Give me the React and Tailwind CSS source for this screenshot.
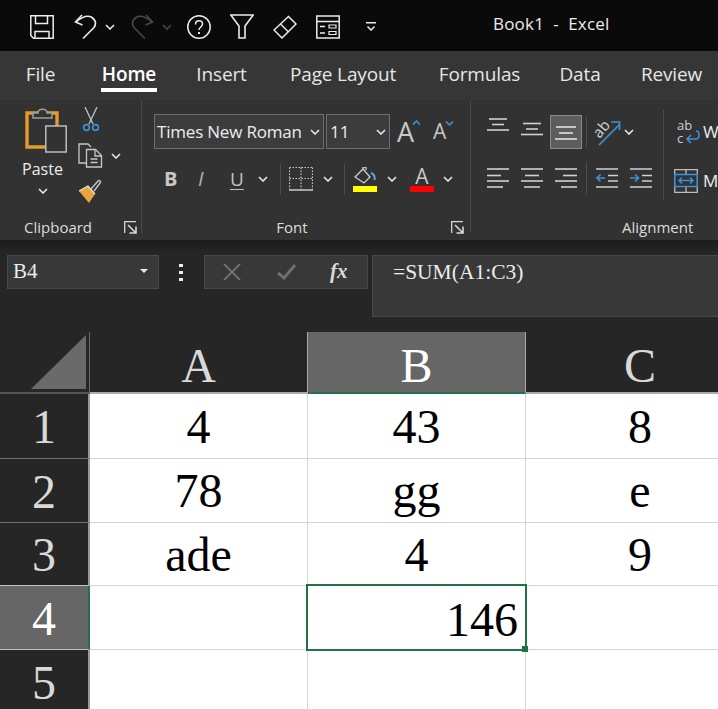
import React from 'react';

const UI_FONT = "font-['Open_Sans','Noto_Sans',sans-serif]";
const SERIF = "font-['Liberation_Serif','Times_New_Roman',serif]";

/* ── little icon helpers ── */
function Chev({ className = 'ml-0', color = '#e6e6e6' }) {
  return (
    <svg className={`${className} shrink-0`} width="10" height="6" viewBox="0 0 10 6" fill="none">
      <path d="M1 1l4 4 4-4" stroke={color} strokeWidth="1.6" />
    </svg>
  );
}

function Lines({ rows, active }) {
  // rows: [x1, x2, y] list in a 22x20 box
  return (
    <svg className="shrink-0 block" width="22" height="20" viewBox="0 0 22 20" fill="none" stroke={active ? '#e2e2e2' : '#d0d0d0'} strokeWidth="1.6">
      {rows.map(([a, b, y], i) => (
        <path key={i} d={`M${a} ${y}H${b}`} />
      ))}
    </svg>
  );
}

function Launcher() {
  return (
    <svg width="13" height="13" viewBox="0 0 13 13" fill="none" stroke="#d8d8d8" strokeWidth="1.3">
      <path d="M.7 12V.7H12" />
      <path d="M4 4l7.5 7.5M5.5 12h6.5V5.5" strokeWidth="1.6" />
    </svg>
  );
}

function GroupSep({ h = 'h-[32px]' }) {
  return <div className={`w-px ${h} bg-[#4d4d4d] shrink-0`} />;
}

function Quick() {
  const c = '#ececec';
  return (
    <div className="h-[51px] bg-[#0a0a0a] flex items-center pl-[30px] pt-[2px] shrink-0">
      {/* save */}
      <svg width="24" height="24" viewBox="0 0 24 24" fill="none" stroke={c} strokeWidth="1.5">
        <path d="M.8.8h22.4v22.4H3.5L.8 20.5z" />
        <path d="M5.5 1v7.5h12V1M5 23v-6.5h14V23" />
      </svg>
      {/* undo */}
      <svg className="ml-[20px]" width="23" height="25" viewBox="0 0 23 25" fill="none" stroke={c} strokeWidth="1.6">
        <path d="M8 1L1.5 8l7 3" />
        <path d="M2 8C8 3 14 1 18 3.5c4 3 4 7 2 10L9 24.500" />
      </svg>
      <Chev className="ml-[8px]" />
      {/* redo, disabled */}
      <svg className="ml-[16px]" width="23" height="25" viewBox="0 0 23 25" fill="none" stroke="#484848" strokeWidth="1.6">
        <path d="M15 1l6.500 7-7 3" />
        <path d="M21 8C15 3 9 1 5 3.500c-4 3-4 7-2 10l11 11" />
      </svg>
      <Chev className="ml-[8px]" color="#484848" />
      {/* help */}
      <svg className="ml-[15px]" width="24" height="24" viewBox="0 0 24 24" fill="none" stroke={c} strokeWidth="1.5">
        <circle cx="12" cy="12" r="11.200" />
        <path d="M8.500 9.500C8.500 7 10 5.800 12 5.800s3.500 1.300 3.500 3.200c0 3-3.500 3-3.500 6" />
        <path d="M12 17v2" strokeWidth="1.900" />
      </svg>
      {/* filter */}
      <svg className="ml-[19px]" width="24" height="25" viewBox="0 0 24 25" fill="none" stroke={c} strokeWidth="1.6">
        <path d="M.8 1h22.400L15 12v12H9V12z" />
      </svg>
      {/* clear */}
      <svg className="ml-[19px]" width="24" height="24" viewBox="0 0 24 24" fill="none" stroke={c} strokeWidth="1.5">
        <path d="M15.500 1.500L23 9 9 23 1 15z" />
        <path d="M7.500 9l8 8" />
      </svg>
      {/* form */}
      <svg className="ml-[19px]" width="24" height="24" viewBox="0 0 24 24" fill="none" stroke={c} strokeWidth="1.5">
        <path d="M.8 1h22.400v22H.8zM1 6.500h22" />
        <path d="M4 11.500h5M4 18h5" />
        <path d="M13 10h7v3h-7zM13 16.500h7v3h-7z" strokeWidth="1.200" />
      </svg>
      {/* customize */}
      <svg className="ml-[26px]" width="10" height="9" viewBox="0 0 10 9" fill="none" stroke={c} strokeWidth="1.500">
        <path d="M0 .8h10M1.500 4.500L5 8l3.500-3.500" />
      </svg>
      <span className={`${UI_FONT} ml-[117px] mb-[5px] text-[17px] tracking-[0.2px] text-[#ececec] whitespace-pre`}>Book1  -  Excel</span>
    </div>
  );
}

function Tabs() {
  const tabs = [
    ['File', 'w-[29px] ml-[26px]'],
    ['Home', 'w-[56px] ml-[46px]'],
    ['Insert', 'w-[47px] ml-[41px]'],
    ['Page Layout', 'w-[106px] ml-[45px]'],
    ['Formulas', 'w-[81px] ml-[43px]'],
    ['Data', 'w-[40px] ml-[40px]'],
    ['Review', 'w-[61px] ml-[41px]'],
  ];
  return (
    <div className="h-[49px] bg-[#363636] flex shrink-0">
      {tabs.map(([name, cls]) => (
        <div key={name} className={`${cls} h-full relative flex justify-center pt-[10px] shrink-0`}>
          <span className={`${UI_FONT} text-[19px] leading-[26px] tracking-[-0.15px] whitespace-nowrap ${name === 'Home' ? 'text-white font-semibold' : 'text-[#e6e6e6]'}`}>
            {name}
          </span>
          {name === 'Home' && <div className="absolute left-0 right-0 top-[37px] h-[4px] bg-white" />}
        </div>
      ))}
    </div>
  );
}

function GroupLabel({ className, children }) {
  return (
    <span className={`${UI_FONT} ${className} text-[15px] leading-[22px] text-[#dcdcdc]`}>{children}</span>
  );
}

function Clipboard() {
  return (
    <div className="w-[142px] h-[132px] mt-px border-r border-[#4a4a4a] flex flex-col shrink-0">
      <div className="flex pt-[6px]">
        <div className="w-[78px] flex flex-col items-center pl-[7px]">
          <svg className="ml-[7px]" width="42" height="46" viewBox="0 0 42 46" fill="none">
            <path d="M2 6h30v34H2z" stroke="#e69a2c" strokeWidth="3.400" />
            <path d="M8 11V6h5c0-5 9-5 9 0h5v5z" fill="#323232" stroke="#9d9d9d" strokeWidth="1.500" />
            <path d="M20.800 19h20.400v26H20.800z" fill="#323232" stroke="#bdbdbd" strokeWidth="1.500" />
          </svg>
          <span className={`${UI_FONT} text-[16px] leading-[22px] mt-[5px] text-[#ececec]`}>Paste</span>
          <Chev className="mt-[8px]" />
        </div>
        <div className="flex flex-col">
          <svg className="ml-[4px]" width="18" height="25" viewBox="0 0 18 25" fill="none">
            <path d="M3 0l8 17M15 0L7 17" stroke="#c4c4c4" strokeWidth="1.300" />
            <circle cx="4.500" cy="20.500" r="2.900" stroke="#3b92d8" strokeWidth="1.600" />
            <circle cx="13.500" cy="20.500" r="2.900" stroke="#3b92d8" strokeWidth="1.600" />
          </svg>
          <div className="flex items-center mt-[11px]">
            <svg width="25" height="25" viewBox="0 0 25 25" fill="none" stroke="#c8c8c8" strokeWidth="1.300">
              <path d="M8 20H1V1h9l3 3" />
              <path d="M8.500 6.500h9l6 6v11.500h-15z" />
              <path d="M17 7v6h6M12.500 16h7M12.500 19.500h7" />
            </svg>
            <Chev className="ml-[8px]" />
          </div>
          <svg className="mt-[11px]" width="25" height="25" viewBox="0 0 25 25" fill="none">
            <path d="M1 12l9-5 7 8-6 9z" fill="#e9a53c" />
            <path d="M1 12l9-5 7 8" stroke="#e4e4e4" strokeWidth="1.200" />
            <path d="M13 10l7-8c1.500-1.500 3.500.5 2 2l-6 8" stroke="#c8c8c8" strokeWidth="1.400" />
          </svg>
        </div>
      </div>
      <div className="flex items-center mt-auto -mb-[5px] h-[22px]">
        <GroupLabel className="ml-[24px]">Clipboard</GroupLabel>
        <div className="ml-[32px] flex"><Launcher /></div>
      </div>
    </div>
  );
}

function Combo({ w, children }) {
  return (
    <div className={`${w} h-[35px] bg-[#3c3c3c] border border-[#6e6e6e] flex items-center shrink-0`}>
      {children}
    </div>
  );
}

function Font() {
  return (
    <div className="w-[329px] h-[132px] mt-px border-r border-[#4a4a4a] flex flex-col shrink-0">
      <div className="flex items-center ml-[12px] mt-[13px] h-[35px]">
        <Combo w="w-[170px]">
          <span className={`${UI_FONT} text-[17px] ml-[2px] text-[#ececec] whitespace-nowrap tracking-[-0.2px]`}>Times New Roman</span>
          <Chev className="ml-auto mr-[3px]" />
        </Combo>
        <div className="w-[2px] shrink-0" />
        <Combo w="w-[64px]">
          <span className={`${UI_FONT} text-[17px] ml-[3px] text-[#ececec]`}>11</span>
          <Chev className="ml-auto mr-[3px]" />
        </Combo>
        <span className={`${UI_FONT} text-[27px] leading-none ml-[7px] text-[#c8c8c8] relative`}>
          A
          <svg className="absolute -right-[7px] top-[2px]" width="9" height="5" viewBox="0 0 9 5" fill="none" stroke="#3b92d8" strokeWidth="1.600"><path d="M1 4.500l3.500-3.500 3.500 3.500" /></svg>
        </span>
        <span className={`${UI_FONT} text-[21px] leading-none ml-[19px] text-[#c8c8c8] relative`}>
          A
          <svg className="absolute -right-[8px] top-[0px]" width="9" height="5" viewBox="0 0 9 5" fill="none" stroke="#3b92d8" strokeWidth="1.600"><path d="M1 .5l3.500 3.500 3.500-3.500" /></svg>
        </span>
      </div>
      <div className="flex items-center h-[32px] mt-[14px]">
        <span className={`${UI_FONT} font-bold text-[20px] w-[14px] ml-[22px] text-[#c8c8c8]`}>B</span>
        <span className={`${UI_FONT} italic text-[20px] w-[12px] ml-[20px] text-[#b4b4b4]`}>I</span>
        <span className={`${UI_FONT} text-[19px] ml-[20px] text-[#c0c0c0] underline underline-offset-[3px]`}>U</span>
        <Chev className="ml-[14px]" />
        <div className="w-[12px] shrink-0" />
        <GroupSep />
        <svg className="ml-[8px]" width="24" height="24" viewBox="0 0 24 24" fill="none" stroke="#c8c8c8">
          <path d="M.5.500h23M.5.500v22M23.500.500v22M12 .5v22M.5 11.500h23" strokeWidth="1.200" strokeDasharray="1.500 1.500" />
          <path d="M0 23h24" strokeWidth="1.500" />
        </svg>
        <Chev className="ml-[10px]" />
        <div className="w-[11px] shrink-0" />
        <GroupSep />
        <div className="ml-[8px] w-[24px] flex flex-col items-center">
          <svg width="22" height="18" viewBox="0 0 22 18" fill="none">
            <path d="M1 10l8-8 7 8-6 6z" stroke="#d0d0d0" strokeWidth="1.300" />
            <path d="M9 2V0h3v3" stroke="#d0d0d0" strokeWidth="1.300" />
            <path d="M17 6c3 1 4 4 3.500 7" stroke="#5ea7dd" strokeWidth="2" />
          </svg>
          <div className="w-[24px] h-[6px] mt-[1px] bg-[#ffff00]" />
        </div>
        <Chev className="ml-[10px]" />
        <div className="ml-[13px] w-[24px] flex flex-col items-center">
          <span className={`${UI_FONT} text-[21px] leading-[18px] text-[#c8c8c8]`}>A</span>
          <div className="w-[24px] h-[6px] mt-[1px] bg-[#ff0000]" />
        </div>
        <Chev className="ml-[9px]" />
      </div>
      <div className="flex items-center h-[22px] mt-auto -mb-[5px] relative justify-center pr-[28px]">
        <GroupLabel>Font</GroupLabel>
        <div className="absolute right-[6px] top-[5px] flex"><Launcher /></div>
      </div>
    </div>
  );
}

function Alignment() {
  return (
    <div className="flex-1 h-[132px] mt-px flex flex-col">
      <div className="flex">
        <div className="w-[192px] shrink-0 flex flex-col">
          <div className="flex items-center mt-[14px] h-[34px]">
            <div className="ml-[16px] mb-[11px]"><Lines rows={[[2, 20, 2], [5, 17, 7.500], [0, 22, 13]]} /></div>
            <div className="ml-[12px] mb-[3px]"><Lines rows={[[2, 20, 2.500], [5, 17, 8], [0, 22, 13.500]]} /></div>
            <div className="ml-[7px] w-[32px] h-[34px] bg-[#5d5d5d] border border-[#8a8a8a] flex items-center justify-center">
              <div className="mt-[4px]"><Lines active rows={[[1, 21, 3], [4, 18, 9], [0, 22, 15]]} /></div>
            </div>
            <div className="w-[4px] shrink-0" />
            <GroupSep />
            <svg className="ml-[8px] overflow-visible" width="26" height="27" viewBox="0 0 26 27" fill="none">
              <path d="M4 26L24 6" stroke="#3b92d8" strokeWidth="1.700" />
              <path d="M16 3h8.500v8" stroke="#3b92d8" strokeWidth="1.700" />
              <text x="-1" y="16" transform="rotate(-50 6 12)" fontSize="15" fill="#d0d0d0" fontFamily="Open Sans, sans-serif">ab</text>
            </svg>
            <Chev className="ml-[3px]" />
          </div>
          <div className="flex items-center mt-[13px] h-[32px]">
            <div className="ml-[16px]"><Lines rows={[[0, 22, 1], [0, 14, 7.500], [0, 22, 13], [0, 16, 19]]} /></div>
            <div className="ml-[12px]"><Lines rows={[[0, 22, 1], [4, 18, 7.500], [0, 22, 13], [3, 19, 19]]} /></div>
            <div className="ml-[12px]"><Lines rows={[[0, 22, 1], [8, 22, 7.500], [0, 22, 13], [6, 22, 19]]} /></div>
            <div className="w-[9px] shrink-0" />
            <GroupSep />
            <svg className="ml-[9px]" width="22" height="20" viewBox="0 0 22 20" fill="none">
              <path d="M0 1h22M12 7.500h10M12 13h10M0 19h22" stroke="#d0d0d0" strokeWidth="1.600" />
              <path d="M9 10H1M4.500 6.500L1 10l3.500 3.500" stroke="#3b92d8" strokeWidth="1.700" />
            </svg>
            <svg className="ml-[12px]" width="22" height="20" viewBox="0 0 22 20" fill="none">
              <path d="M0 1h22M12 7.500h10M12 13h10M0 19h22" stroke="#d0d0d0" strokeWidth="1.600" />
              <path d="M0 10h8M5 6.500L8.500 10 5 13.500" stroke="#3b92d8" strokeWidth="1.700" />
            </svg>
          </div>
        </div>
        <div className="w-px h-[90px] mt-[9px] bg-[#4a4a4a] shrink-0" />
        <WrapMerge />
      </div>
      <div className="flex items-center h-[22px] mt-auto -mb-[5px]">
        <GroupLabel className="ml-[151px]">Alignment</GroupLabel>
      </div>
    </div>
  );
}

function WrapMerge() {
  return (
    <div className="flex flex-col pl-[10px] pt-[18px]">
      <div className="flex items-center h-[26px] pl-[3px]">
        <svg className="overflow-visible" width="24" height="24" viewBox="0 0 24 24" fill="none">
          <text x="0" y="10" fontSize="13" fill="#d0d0d0" fontFamily="Open Sans, sans-serif">ab</text>
          <text x="0" y="23" fontSize="13" fill="#d0d0d0" fontFamily="Open Sans, sans-serif">c</text>
          <path d="M19 11c4 0 4 8 0 8h-8M14 15l-4 4 4 4" stroke="#3b92d8" strokeWidth="1.600" />
        </svg>
        <span className={`${UI_FONT} text-[17px] text-[#ececec] ml-[2px]`}>W</span>
      </div>
      <div className="flex items-center h-[26px] mt-[23px]">
        <svg width="24" height="24" viewBox="0 0 24 24" fill="none">
          <path d="M.7.700h22.600v22.600H.7zM12 1v22" stroke="#bdbdbd" strokeWidth="1.300" />
          <path d="M.8 5.500h22.400v12H.800z" fill="#323232" stroke="#3b92d8" strokeWidth="1.600" />
          <path d="M5 11.500h14M8 8.500l-3 3 3 3M16 8.500l3 3-3 3" stroke="#3b92d8" strokeWidth="1.500" />
        </svg>
        <span className={`${UI_FONT} text-[17px] text-[#ececec] ml-[5px]`}>M</span>
      </div>
    </div>
  );
}

function FormulaBar() {
  return (
    <div className="h-[92px] bg-[#262626] flex items-start pt-[15px] shrink-0 bg-linear-to-b from-[#1b1b1b] to-[#262626] to-[12px]">
      <div className="ml-[7px] w-[152px] h-[34px] bg-[#383838] border border-[#484848] flex items-center shrink-0">
        <span className={`${SERIF} text-[21px] ml-[5px] text-[#ececec]`}>B4</span>
        <svg className="ml-auto mr-[10px] mb-[2px]" width="8" height="4" viewBox="0 0 8 4"><path d="M0 0h8L4 4z" fill="#ececec" /></svg>
      </div>
      <div className="ml-[20px] w-[4px] h-[34px] flex flex-col justify-center gap-[4px] shrink-0">
        <div className="w-[4px] h-[3px] bg-[#ececec]" />
        <div className="w-[4px] h-[3px] bg-[#ececec]" />
        <div className="w-[4px] h-[3px] bg-[#ececec]" />
      </div>
      <div className="ml-[21px] w-[164px] h-[34px] bg-[#383838] border border-[#484848] flex items-center shrink-0">
        <svg className="ml-[18px]" width="18" height="16" viewBox="0 0 18 16" fill="none" stroke="#6e6e6e" strokeWidth="2"><path d="M1 0l16 16M17 0L1 16" /></svg>
        <svg className="ml-[36px]" width="20" height="16" viewBox="0 0 20 16" fill="none" stroke="#6e6e6e" strokeWidth="3"><path d="M1 9l6 5L18 1" /></svg>
        <span className={`${SERIF} italic font-bold text-[21px] ml-[33px] text-[#d8d8d8]`}>fx</span>
      </div>
      <div className="ml-[4px] flex-1 h-[62px] bg-[#383838] border border-[#484848] border-r-0 pl-[20px] pt-[4px]">
        <span className={`${SERIF} text-[21.5px] leading-[24px] text-[#ececec]`}>=SUM(A1:C3)</span>
      </div>
    </div>
  );
}

const ROWS = [
  { n: '1', cells: ['4', '43', '8'], h: 'h-[65px]' },
  { n: '2', cells: ['78', 'gg', 'e'], h: 'h-[64px]' },
  { n: '3', cells: ['ade', '4', '9'], h: 'h-[63px]', nextActive: true },
  { n: '4', cells: ['', '', ''], h: 'h-[64px]', active: true },
  { n: '5', cells: ['', '', ''], h: 'h-[64px]' },
];

function rowHeadClass(r) {
  if (r.active) return 'bg-[#666666] text-white border-r-2 border-r-[#217346] border-b-[#c0c0c0]';
  if (r.nextActive) return 'bg-[#262626] text-[#d9d9d9] border-r-2 border-r-[#9a9a9a] border-b-[#c0c0c0]';
  return 'bg-[#262626] text-[#d9d9d9] border-r-2 border-r-[#9a9a9a] border-b-[#6e6e6e]';
}

function Sheet() {
  return (
    <div className={`${SERIF} w-[754px] grid grid-cols-[90px_218px_218px_228px] grid-rows-[62px] bg-white`}>
      {/* column headers */}
      <div className="bg-[#262626] border-r border-[#6a6a6a] border-b-2 border-b-[#555555] flex items-end justify-end pr-[3px] pb-[3px]">
        <svg width="55" height="54" viewBox="0 0 55 54"><path d="M55 0v54H0z" fill="#6a6a6a" /></svg>
      </div>
      <div className="bg-[#262626] border-r border-[#aaaaaa] border-b-2 border-b-[#aaaaaa] flex items-center justify-center text-[48px] leading-none text-[#d9d9d9] pt-[7px]">A</div>
      <div className="bg-[#666666] border-r border-[#aaaaaa] border-b-2 border-b-[#217346] flex items-center justify-center text-[48px] leading-none text-white pt-[7px]">B</div>
      <div className="bg-[#262626] border-b-2 border-b-[#aaaaaa] flex items-center justify-center text-[48px] leading-none text-[#d9d9d9] pt-[7px]">C</div>

      {ROWS.map((r) => (
        <React.Fragment key={r.n}>
          <div className={`${r.h} ${rowHeadClass(r)} border-b flex items-center justify-center text-[48px] leading-none pt-[2px]`}>
            {r.n}
          </div>
          {r.cells.map((c, i) => (
            <div
              key={i}
              className={`${r.h} border-b border-[#d4d4d4] ${i < 2 ? 'border-r' : ''} flex items-center justify-center text-[48px] leading-none text-black pt-[1px]`}
            >
              {c}
            </div>
          ))}
        </React.Fragment>
      ))}
    </div>
  );
}

export default function App() {
  return (
    <div className="w-[718px] h-[709px] overflow-hidden flex flex-col relative bg-[#262626]">
      <Quick />
      <Tabs />
      <div className="h-[140px] bg-[#323232] flex shrink-0 overflow-hidden">
        <Clipboard />
        <Font />
        <Alignment />
      </div>
      <FormulaBar />
      <Sheet />
      {/* selection box over B4 */}
      <div className="absolute left-[306px] top-[584px] w-[221px] h-[67px] border-2 border-[#217346] flex items-center justify-end pr-[7px] pt-[4px]">
        <span className={`${SERIF} text-[48px] leading-none text-black`}>146</span>
        <div className="absolute -right-[3px] -bottom-[3px] w-[6px] h-[6px] bg-[#217346]" />
      </div>
    </div>
  );
}
